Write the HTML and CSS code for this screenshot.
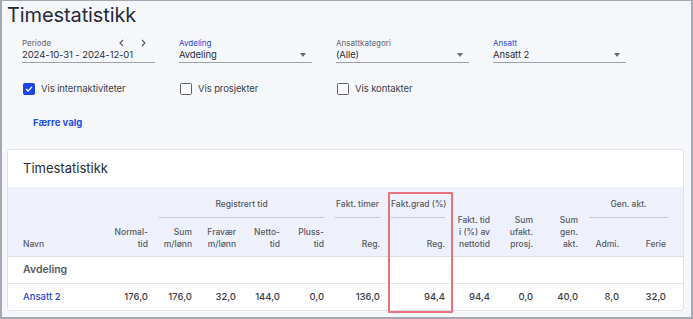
FILE: index.html
```html
<!DOCTYPE html>
<html lang="no">
<head>
  <meta charset="UTF-8" />
  <title>Timestatistikk</title>
  <link rel="stylesheet" href="styles.css">
</head>
<body>
<div class="frame">
  <h1 class="page-title">Timestatistikk</h1>

  <div class="filters">
    <div class="field">
      <div class="field-head">
        <span class="field-label">Periode</span>
        <span class="period-nav">
          <svg width="5" height="8" viewBox="0 0 5 8"><path d="M4 1 L1 4 L4 7" fill="none" stroke="#555" stroke-width="1.1"/></svg>
          <svg width="5" height="8" viewBox="0 0 5 8"><path d="M1 1 L4 4 L1 7" fill="none" stroke="#555" stroke-width="1.1"/></svg>
        </span>
      </div>
      <div class="field-value">2024-10-31 - 2024-12-01</div>
    </div>
    <div class="field">
      <div class="field-head"><span class="field-label active">Avdeling</span></div>
      <div class="field-value">Avdeling <span class="caret"></span></div>
    </div>
    <div class="field">
      <div class="field-head"><span class="field-label">Ansattkategori</span></div>
      <div class="field-value">(Alle) <span class="caret"></span></div>
    </div>
    <div class="field">
      <div class="field-head"><span class="field-label active">Ansatt</span></div>
      <div class="field-value">Ansatt 2 <span class="caret"></span></div>
    </div>
  </div>

  <div class="checks">
    <label class="check">
      <span class="box checked">
        <svg width="8" height="6" viewBox="0 0 8 6"><path d="M1 3 L3 5 L7 1" fill="none" stroke="#fff" stroke-width="1.3"/></svg>
      </span>
      Vis internaktiviteter
    </label>
    <label class="check"><span class="box"></span>Vis prosjekter</label>
    <label class="check"><span class="box"></span>Vis kontakter</label>
  </div>

  <a class="less-link">Færre valg</a>

  <div class="card">
    <div class="card-title">Timestatistikk</div>
    <table class="stats">
      <colgroup>
        <col class="c-name"><col class="c-45"><col class="c-44"><col class="c-44"><col class="c-44"><col class="c-44">
        <col class="c-56"><col class="c-65"><col class="c-45"><col class="c-43"><col class="c-45"><col class="c-41"><col class="c-last">
      </colgroup>
      <thead>
        <tr class="head-top">
          <th rowspan="2" class="name">Navn</th>
          <th rowspan="2">Normal-<br>tid</th>
          <th colspan="4" class="group"><div>Registrert tid</div></th>
          <th class="group"><div>Fakt. timer</div></th>
          <th class="group"><div>Fakt.grad (%)</div></th>
          <th rowspan="2">Fakt. tid<br>i (%) av<br>nettotid</th>
          <th rowspan="2">Sum<br>ufakt.<br>prosj.</th>
          <th rowspan="2">Sum<br>gen.<br>akt.</th>
          <th colspan="2" class="group last"><div>Gen. akt.</div></th>
        </tr>
        <tr class="head-sub">
          <th>Sum<br>m/lønn</th>
          <th>Fravær<br>m/lønn</th>
          <th>Netto-<br>tid</th>
          <th>Pluss-<br>tid</th>
          <th>Reg.</th>
          <th>Reg.</th>
          <th>Admi.</th>
          <th class="last">Ferie</th>
        </tr>
      </thead>
      <tbody>
        <tr class="dept">
          <td class="name" colspan="13">Avdeling</td>
        </tr>
        <tr>
          <td class="name"><a class="emp-link">Ansatt 2</a></td>
          <td>176,0</td>
          <td>176,0</td>
          <td>32,0</td>
          <td>144,0</td>
          <td>0,0</td>
          <td>136,0</td>
          <td>94,4</td>
          <td>94,4</td>
          <td>0,0</td>
          <td>40,0</td>
          <td>8,0</td>
          <td class="last">32,0</td>
        </tr>
      </tbody>
    </table>
    <div class="highlight"></div>
  </div>
</div>
</body>
</html>
```

FILE: styles.css
```css
* {
  box-sizing: border-box;
}
body {
  margin: 0;
  font-family: Inter, "Noto Sans", sans-serif;
  color: #2b2f3a;
}
.frame {
  width: 693px;
  height: 319px;
  border: solid #a5a8ae;
  border-width: 1px 2px 2px 2px;
  background: #f6f7fb;
  padding: 2px 8px 0 5px;
  overflow: hidden;
}
.page-title {
  margin: 0;
  font-size: 20px;
  line-height: 25px;
  font-weight: 400;
  letter-spacing: -0.1px;
  color: #262b3b;
}

/* filters */
.filters {
  display: flex;
  gap: 24px;
  margin-top: 10px;
  padding-left: 15px;
}
.field {
  width: 133px;
  border-bottom: 1px solid #9da1a9;
  padding-bottom: 1px;
}
.field-head {
  display: flex;
  justify-content: space-between;
  align-items: center;
  height: 10px;
}
.field-label {
  font-size: 8px;
  line-height: 10px;
  color: #5f6370;
}
.field-label.active {
  color: #2448d6;
}
.period-nav {
  display: flex;
  gap: 17px;
  margin-right: 9px;
}
.period-nav svg {
  display: block;
}
.field-value {
  display: flex;
  justify-content: space-between;
  align-items: center;
  margin-top: 1px;
  font-size: 9.5px;
  letter-spacing: -0.1px;
  line-height: 12px;
  color: #2b2f3a;
}
.caret {
  width: 0;
  height: 0;
  border-left: 3.5px solid transparent;
  border-right: 3.5px solid transparent;
  border-top: 4px solid #666a72;
  margin-right: 6px;
}

/* checkboxes */
.checks {
  display: flex;
  margin-top: 20px;
  padding-left: 16px;
}
.check {
  display: flex;
  align-items: center;
  width: 157px;
  font-size: 9.5px;
  letter-spacing: -0.1px;
  line-height: 12px;
  color: #3a3e48;
}
.box {
  width: 12px;
  height: 12px;
  border: 1px solid #5d616a;
  border-radius: 1.5px;
  background: #fff;
  margin-right: 6px;
  display: flex;
  align-items: center;
  justify-content: center;
}
.box.checked {
  background: #1d46e6;
  border-color: #1d46e6;
}
.less-link {
  display: block;
  margin: 22px 0 0 26px;
  font-size: 9.5px;
  line-height: 12px;
  font-weight: 700;
  color: #1f4ee0;
}

/* card */
.card {
  position: relative;
  margin-top: 20px;
  width: 677px;
  background: #fff;
  border: 1px solid #dfe1e6;
  border-radius: 3px;
}
.card-title {
  padding: 10px 15px 11px;
  font-size: 13px;
  line-height: 16px;
  color: #262b3b;
}
.stats {
  width: 675px;
  table-layout: fixed;
  border-collapse: collapse;
  font-size: 9.5px;
}
.c-name { width: 100px; }
.c-41 { width: 41px; }
.c-43 { width: 43px; }
.c-44 { width: 44px; }
.c-45 { width: 45px; }
.c-56 { width: 56px; }
.c-65 { width: 65px; }
.c-last { width: 59px; }

.stats th {
  background: #eef1fb;
  font-size: 8.5px;
  line-height: 12px;
  font-weight: 500;
  color: #555a66;
  text-align: right;
  vertical-align: bottom;
  white-space: nowrap;
  padding: 0 5px 6px 6px;
}
.stats thead tr.head-sub th,
.stats thead th[rowspan] {
  border-bottom: 1px solid #dcdfe6;
}
.head-top {
  height: 31px;
}
.head-sub {
  height: 38px;
}
.stats th.group {
  padding-bottom: 0;
  text-align: center;
  vertical-align: top;
}
.stats th.group div {
  padding: 11px 0 7px;
  border-bottom: 1px solid #c8ccd8;
}
.stats th.group.last {
  padding-right: 15px;
}
.stats .name {
  text-align: left;
  padding-left: 15px;
}
.stats th.last,
.stats td.last {
  padding-right: 17px;
}
.stats td {
  height: 27px;
  text-align: right;
  white-space: nowrap;
  padding: 0 5px 0 6px;
  color: #3a3e48;
  font-weight: 500;
}
.stats tr.dept td {
  border-bottom: 1px solid #e3e5ea;
  font-size: 10.5px;
  font-weight: 600;
  color: #555a62;
}
.emp-link {
  color: #1f45cf;
  font-weight: 500;
}
.highlight {
  position: absolute;
  left: 380px;
  top: 42px;
  width: 65px;
  height: 121px;
  border: 2px solid #e8727b;
  border-radius: 1px;
}
```
